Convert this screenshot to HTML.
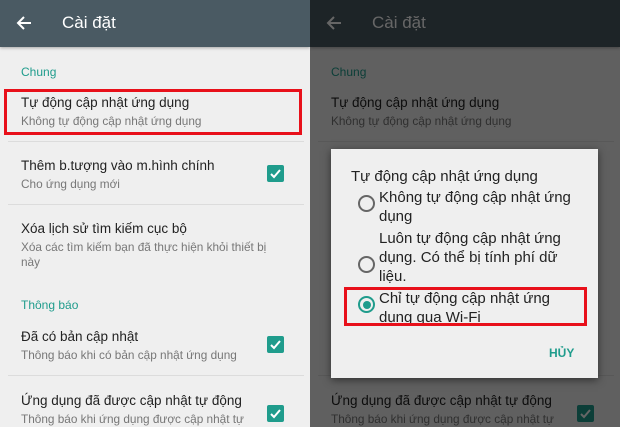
<!DOCTYPE html>
<html><head><meta charset="utf-8"><style>
*{margin:0;padding:0;box-sizing:border-box}
body{width:620px;height:427px;overflow:hidden;position:relative;font-family:"Liberation Sans","DejaVu Sans",sans-serif;background:#efefef}
.p{position:absolute;top:0;width:310px;height:427px;background:#efefef;overflow:hidden}
.hd{position:absolute;left:0;top:0;width:310px;height:47px;background:#4a5a63;box-shadow:0 1px 3px rgba(0,0,0,.3)}
.hd .t{position:absolute;left:62px;top:13px;color:#fff;font-size:17px}
.hd svg{position:absolute;left:16px;top:15px}
.a{position:absolute;left:21px;white-space:nowrap}
.sec{color:#1f9c8c;font-size:12px}
.ti{color:#222;font-size:13.5px}
.su{color:#777;font-size:11.8px}
.dv{position:absolute;left:8px;width:296px;height:1px;background:#dcdcdc}
.cb{position:absolute;left:267px;width:17px;height:17px;background:#1f9c8c;border-radius:2px}
.cb svg{position:absolute;left:2px;top:2px}
.ov{position:absolute;left:310px;top:0;width:310px;height:427px;background:rgba(0,0,0,.6)}
.dl{position:absolute;left:331px;top:149px;width:267px;height:229px;background:#efefef;box-shadow:0 2px 8px rgba(0,0,0,.5)}
.dl .h{position:absolute;left:20px;top:19px;font-size:15px;color:#222}
.op{position:absolute;left:48px;font-size:15px;line-height:19px;color:#222}
.rd{position:absolute;left:27px;width:17px;height:17px;border:2px solid #666;border-radius:50%}
.rd.on{border-color:#1f9c8c}
.rd.on:after{content:"";position:absolute;left:2.5px;top:2.5px;width:8px;height:8px;border-radius:50%;background:#1f9c8c}
.red{position:absolute;border:3px solid #e8101a}
</style></head><body>
<div class="p" style="left:0" id="L">
<div class="hd"><svg width="16" height="16" viewBox="0 0 16 16"><path d="M15 8H2M8 2L2 8l6 6" stroke="#fff" stroke-width="2" fill="none"/></svg><div class="t">Cài đặt</div></div>
<div class="a sec" style="top:65px">Chung</div>
<div class="a ti" style="top:95px">Tự động cập nhật ứng dụng</div>
<div class="a su" style="top:114px">Không tự động cập nhật ứng dụng</div>
<div class="dv" style="top:141px"></div>
<div class="a ti" style="top:158px">Thêm b.tượng vào m.hình chính</div>
<div class="a su" style="top:177px">Cho ứng dụng mới</div>
<div class="cb" style="top:165px"><svg width="13" height="13" viewBox="0 0 13 13"><path d="M2 7l3 3 6-7" stroke="#fff" stroke-width="2" fill="none"/></svg></div>
<div class="dv" style="top:204px"></div>
<div class="a ti" style="top:221px">Xóa lịch sử tìm kiếm cục bộ</div>
<div class="a su" style="top:240px">Xóa các tìm kiếm bạn đã thực hiện khỏi thiết bị</div>
<div class="a su" style="top:255px">này</div>
<div class="a sec" style="top:298px">Thông báo</div>
<div class="a ti" style="top:329px">Đã có bản cập nhật</div>
<div class="a su" style="top:348px">Thông báo khi có bản cập nhật ứng dụng</div>
<div class="cb" style="top:336px"><svg width="13" height="13" viewBox="0 0 13 13"><path d="M2 7l3 3 6-7" stroke="#fff" stroke-width="2" fill="none"/></svg></div>
<div class="dv" style="top:375px"></div>
<div class="a ti" style="top:393px">Ứng dụng đã được cập nhật tự động</div>
<div class="a su" style="top:412px">Thông báo khi ứng dụng được cập nhật tự</div>
<div class="cb" style="top:405px"><svg width="13" height="13" viewBox="0 0 13 13"><path d="M2 7l3 3 6-7" stroke="#fff" stroke-width="2" fill="none"/></svg></div>
</div>
<div class="p" style="left:310px">
<div class="hd"><svg width="16" height="16" viewBox="0 0 16 16"><path d="M15 8H2M8 2L2 8l6 6" stroke="#fff" stroke-width="2" fill="none"/></svg><div class="t">Cài đặt</div></div>
<div class="a sec" style="top:65px">Chung</div>
<div class="a ti" style="top:95px">Tự động cập nhật ứng dụng</div>
<div class="a su" style="top:114px">Không tự động cập nhật ứng dụng</div>
<div class="dv" style="top:141px"></div>
<div class="a ti" style="top:393px">Ứng dụng đã được cập nhật tự động</div>
<div class="a su" style="top:412px">Thông báo khi ứng dụng được cập nhật tự</div>
<div class="cb" style="top:405px"><svg width="13" height="13" viewBox="0 0 13 13"><path d="M2 7l3 3 6-7" stroke="#fff" stroke-width="2" fill="none"/></svg></div>
<div class="dv" style="top:375px"></div>
</div>
<div class="ov"></div>
<div class="dl">
<div class="h">Tự động cập nhật ứng dụng</div>
<div class="rd" style="top:46px"></div>
<div class="op" style="top:39px">Không tự động cập nhật ứng<br>dụng</div>
<div class="rd" style="top:107px"></div>
<div class="op" style="top:80px">Luôn tự động cập nhật ứng<br>dụng. Có thể bị tính phí dữ<br>liệu.</div>
<div class="rd on" style="top:147px"></div>
<div class="op" style="top:140px">Chỉ tự động cập nhật ứng<br>dụng qua Wi-Fi</div>
<div style="position:absolute;left:218px;top:197px;color:#1f9c8c;font-size:12px;font-weight:bold">HỦY</div>
</div>
<div class="red" style="left:4px;top:89px;width:298px;height:46px"></div>
<div class="red" style="left:344px;top:287px;width:243px;height:39px"></div>
</body></html>
